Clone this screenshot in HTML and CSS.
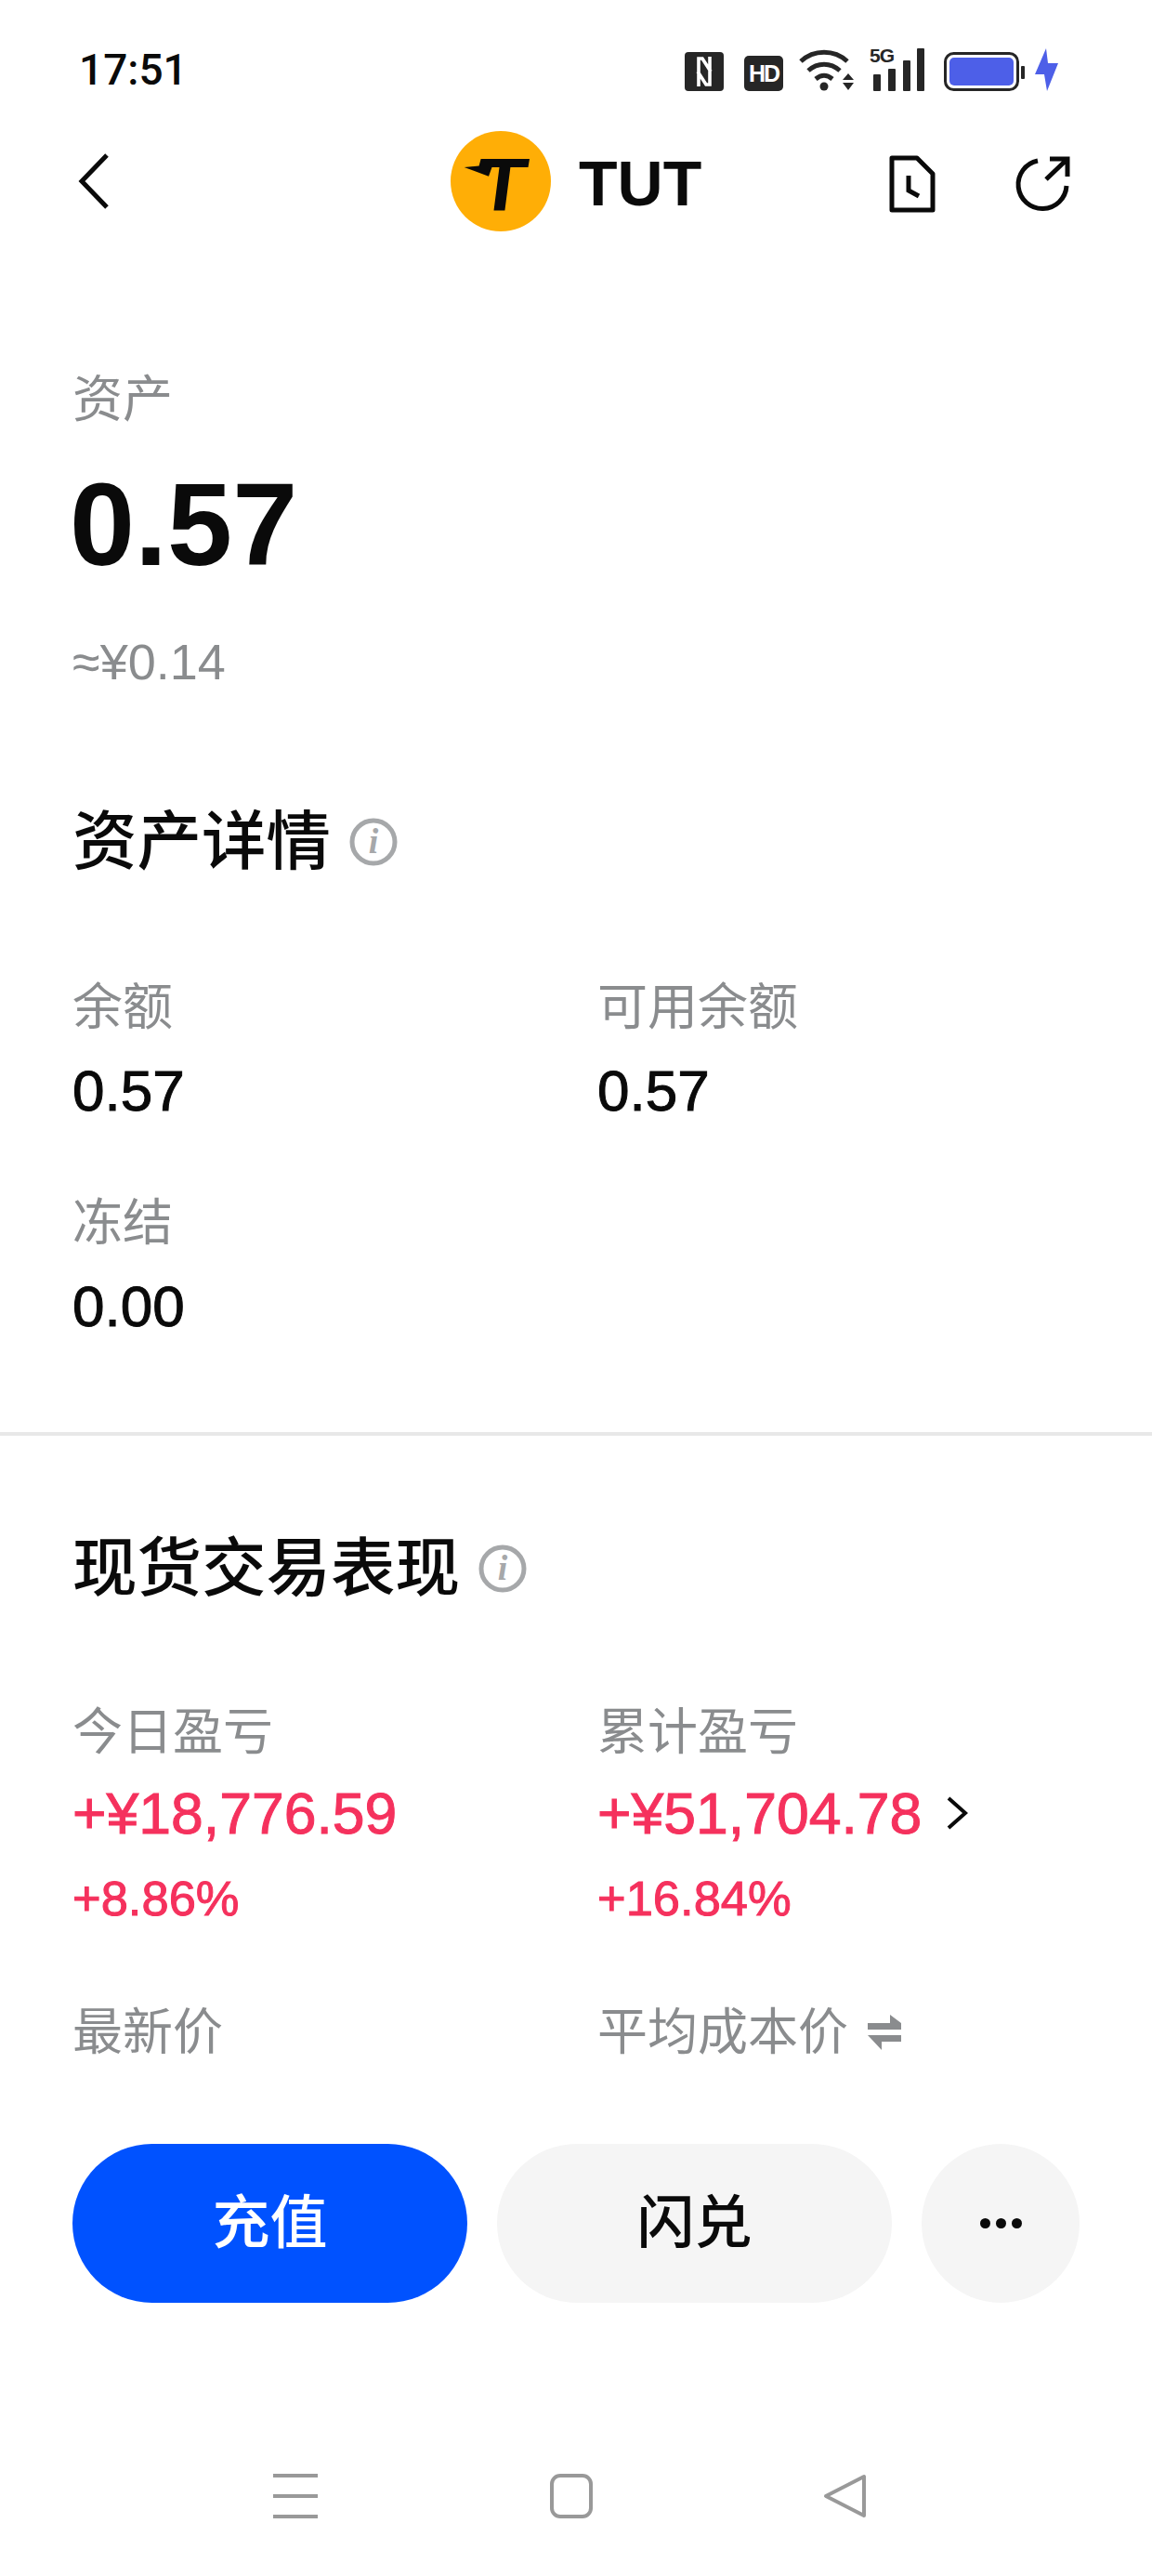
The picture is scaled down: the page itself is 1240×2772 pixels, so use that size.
FILE: index.html
```html
<!DOCTYPE html>
<html lang="zh-CN">
<head>
  <meta charset="UTF-8">
  <title>TUT</title>
  <link rel="stylesheet" href="styles.css">
</head>
<body>
  <div class="phone">

    <!-- STATUS BAR -->
    <div class="status-bar">
      <span class="time">17:51</span>
      <div class="status-icons">
        <svg class="st-nfc" width="42" height="42" viewBox="0 0 42 42"><rect width="42" height="42" rx="4" fill="#262626"/><path d="M15 37V7h4l9 14M27 5v30h-4l-9-14" fill="none" stroke="#fff" stroke-width="3.6"/></svg>
        <span class="st-hd">HD</span>
        <svg class="st-wifi" width="60" height="46" viewBox="0 0 60 46"><g fill="none" stroke="#262626" stroke-width="5"><path d="M2 14C16 1 38 1 52 14"/><path d="M10 24c10-9 24-9 34 0"/><path d="M18 33c6-5 12-5 18 0"/></g><circle cx="27" cy="41" r="4.5" fill="#262626"/><path d="M53 27l6 7H47zM47 37h12l-6 8z" fill="#262626"/></svg>
        <div class="st-signal">
          <span class="st-5g">5G</span>
          <svg width="60" height="46" viewBox="0 0 60 46"><g fill="#262626"><rect x="4" y="28" width="8" height="18" rx="1"/><rect x="20" y="22" width="8" height="24" rx="1"/><rect x="36" y="13" width="8" height="33" rx="1"/><rect x="51" y="0" width="8" height="46" rx="1"/></g></svg>
        </div>
        <svg class="st-batt" width="88" height="42" viewBox="0 0 88 42"><rect x="1.5" y="1.5" width="78" height="39" rx="9" fill="none" stroke="#262626" stroke-width="3"/><rect x="6" y="6" width="69" height="30" rx="5" fill="#4d5fe8"/><rect x="83" y="15" width="4" height="14" rx="1" fill="#262626"/></svg>
        <svg class="st-bolt" width="26" height="46" viewBox="0 0 26 46"><path d="M12 0L0 28h10l3 18L25 16H14z" fill="#4d5fe8"/></svg>
      </div>
    </div>

    <!-- HEADER -->
    <div class="nav">
      <svg class="nav-back" width="34" height="60" viewBox="0 0 34 60"><path d="M31 2L4 30l27 28" fill="none" stroke="#0a0a0a" stroke-width="5"/></svg>
      <div class="nav-title">
        <svg width="108" height="108" viewBox="0 0 108 108"><circle cx="54" cy="54" r="54" fill="#ffae06"/><path d="M32.6 30H85L83.5 39H64.4L58.4 85.6H46.5L52.5 39H44.5L41 48.7 14.7 39 30.6 37.6z" fill="#0a0a0a"/></svg>
        <span class="coin-name">TUT</span>
      </div>
      <div class="nav-actions">
        <svg width="50" height="62" viewBox="0 0 50 62"><path d="M3 3H30L47 20V59H3z" fill="none" stroke="#0a0a0a" stroke-width="5" stroke-linejoin="round"/><path d="M21 22V38L32 44" fill="none" stroke="#0a0a0a" stroke-width="5"/></svg>
        <svg width="60" height="62" viewBox="0 0 60 62"><path d="M25 6A26 26 0 1 0 56 33" fill="none" stroke="#0a0a0a" stroke-width="5"/><path d="M34 26L56 5M38 4H57V23" fill="none" stroke="#0a0a0a" stroke-width="5"/></svg>
      </div>
    </div>

    <!-- ASSET -->
    <section class="asset">
      <div class="label">资产</div>
      <div class="asset-amount">0.57</div>
      <div class="asset-cny">≈¥0.14</div>
    </section>

    <!-- DETAILS -->
    <section class="details">
      <h2 class="section-title">资产详情
        <svg class="info" width="52" height="52" viewBox="0 0 52 52"><circle cx="26" cy="26" r="23" fill="none" stroke="#a6a8aa" stroke-width="5"/><text x="26" y="38" class="info-i">i</text></svg>
      </h2>
      <div class="grid">
        <div class="cell">
          <div class="label">余额</div>
          <div class="value">0.57</div>
        </div>
        <div class="cell">
          <div class="label">可用余额</div>
          <div class="value">0.57</div>
        </div>
        <div class="cell">
          <div class="label">冻结</div>
          <div class="value">0.00</div>
        </div>
      </div>
    </section>

    <div class="divider"></div>

    <!-- SPOT PERFORMANCE -->
    <section class="spot">
      <h2 class="section-title">现货交易表现
        <svg class="info" width="52" height="52" viewBox="0 0 52 52"><circle cx="26" cy="26" r="23" fill="none" stroke="#a6a8aa" stroke-width="5"/><text x="26" y="38" class="info-i">i</text></svg>
      </h2>
      <div class="grid">
        <div class="cell">
          <div class="label">今日盈亏</div>
          <div class="pnl">+¥18,776.59</div>
          <div class="pct">+8.86%</div>
        </div>
        <div class="cell">
          <div class="label">累计盈亏</div>
          <div class="pnl">+¥51,704.78
            <svg width="24" height="36" viewBox="0 0 24 36"><path d="M3 2L21 18 3 34" fill="none" stroke="#0a0a0a" stroke-width="4"/></svg>
          </div>
          <div class="pct">+16.84%</div>
        </div>
        <div class="cell">
          <div class="label">最新价</div>
        </div>
        <div class="cell">
          <div class="label">平均成本价
            <svg class="swap" width="38" height="38" viewBox="0 0 38 38"><path d="M1 9H25V0L37 9V16H1zM37 22V29H16V38L1 22z" fill="#8a8c8e"/></svg>
          </div>
        </div>
      </div>
    </section>

    <!-- BUTTONS -->
    <div class="actions">
      <div class="btn btn-primary">充值</div>
      <div class="btn btn-light">闪兑</div>
      <div class="btn-more"><span></span><span></span><span></span></div>
    </div>

    <!-- ANDROID NAV -->
    <div class="sys-nav">
      <div class="sys-menu"><span></span><span></span><span></span></div>
      <div class="sys-home"></div>
      <svg width="48" height="48" viewBox="0 0 48 48"><path d="M44 3V45L3 24z" fill="none" stroke="#999" stroke-width="4" stroke-linejoin="round"/></svg>
    </div>

  </div>
</body>
</html>
```
FILE: styles.css
```css
* { box-sizing: border-box; }

html, body {
  margin: 0;
  background: #fff;
}

.phone {
  width: 1240px;
  height: 2772px;
  overflow: hidden;
  font-family: "Liberation Sans", "Noto Sans CJK SC", sans-serif;
  color: #0a0a0a;
}

/* status bar */
.status-bar {
  display: flex;
  justify-content: space-between;
  align-items: center;
  height: 50px;
  margin-top: 50px;
  padding: 0 100px 0 85px;
}
.time {
  font-family: Roboto, sans-serif;
  font-size: 46px;
  font-weight: 500;
  line-height: 50px;
}
.status-icons {
  display: flex;
  align-items: flex-end;
  gap: 22px;
}
.st-hd {
  width: 42px;
  height: 38px;
  background: #262626;
  border-radius: 5px;
  color: #fff;
  font-size: 25px;
  font-weight: 700;
  line-height: 38px;
  text-align: center;
  letter-spacing: -2px;
}
.st-wifi { margin-left: -5px; }
.st-signal {
  position: relative;
  margin-left: -6px;
}
.st-signal svg { display: block; }
.st-5g {
  position: absolute;
  left: 0;
  top: -4px;
  font-size: 21px;
  font-weight: 700;
  letter-spacing: -1px;
  color: #262626;
}
.st-batt { margin-left: -2px; }
.st-bolt { margin-left: -12px; }

/* header */
.nav {
  display: flex;
  align-items: center;
  height: 108px;
  margin-top: 41px;
  padding: 0 88px 0 84px;
}
.nav-back { flex: none; }
.nav-title {
  display: flex;
  align-items: center;
  gap: 30px;
  margin-left: 367px;
}
.coin-name {
  font-size: 68px;
  font-weight: 700;
  padding-top: 3px;
}
.nav-actions {
  display: flex;
  align-items: center;
  gap: 85px;
  margin-top: 6px;
  margin-left: auto;
}

/* asset block */
.asset {
  padding: 0 78px;
  margin-top: 141px;
}
.label {
  font-size: 54px;
  line-height: 80px;
  color: #8a8c8e;
  display: flex;
  align-items: center;
  white-space: nowrap;
}
.asset-amount {
  font-size: 126px;
  font-weight: 700;
  line-height: 150px;
  margin-top: 20px;
  margin-left: -3px;
}
.asset-cny {
  font-size: 54px;
  line-height: 70px;
  color: #8a8c8e;
  margin-top: 37px;
}

/* sections */
.details {
  padding: 0 78px;
  margin-top: 119px;
}
.section-title {
  display: flex;
  align-items: center;
  margin: 0;
  font-size: 69.5px;
  font-weight: 500;
  line-height: 80px;
}
.info { margin-left: 20px; }
.info-i {
  font-family: "Liberation Serif", serif;
  font-size: 38px;
  font-style: italic;
  font-weight: 700;
  text-anchor: middle;
  fill: #a6a8aa;
}
.grid {
  display: grid;
  grid-template-columns: 565px 1fr;
}
.details .grid {
  margin-top: 98px;
  row-gap: 62px;
}
.value {
  font-size: 62px;
  line-height: 80px;
  margin-top: 10px;
  -webkit-text-stroke: 1px #0a0a0a;
}
.divider {
  height: 4px;
  margin-top: 95px;
  background: #e8e8e8;
}
.spot {
  padding: 0 78px;
  margin-top: 103px;
}
.spot .grid {
  margin-top: 96px;
  row-gap: 69px;
}
.pnl {
  display: flex;
  align-items: center;
  gap: 26px;
  font-size: 62.5px;
  line-height: 80px;
  margin-top: 7px;
  color: #f5315d;
  -webkit-text-stroke: 1px #f5315d;
  white-space: nowrap;
}
.pct {
  font-size: 52.5px;
  line-height: 70px;
  margin-top: 17px;
  color: #f5315d;
  -webkit-text-stroke: 1px #f5315d;
}
.swap { margin-left: 20px; }

/* buttons */
.actions {
  display: flex;
  gap: 32px;
  margin-top: 80px;
  padding: 0 78px;
}
.btn {
  flex: none;
  width: 425px;
  height: 171px;
  border-radius: 86px;
  font-size: 62px;
  font-weight: 500;
  line-height: 171px;
  text-align: center;
}
.btn-primary {
  background: #0052ff;
  color: #fff;
}
.btn-light { background: #f5f5f5; }
.btn-more {
  display: flex;
  justify-content: center;
  align-items: center;
  gap: 6px;
  flex: none;
  width: 170px;
  height: 171px;
  border-radius: 50%;
  background: #f5f5f5;
}
.btn-more span {
  width: 11px;
  height: 11px;
  border-radius: 50%;
  background: #0a0a0a;
}

/* system nav */
.sys-nav {
  display: flex;
  align-items: center;
  height: 50px;
  margin-top: 183px;
  padding-left: 294px;
}
.sys-menu {
  display: flex;
  flex-direction: column;
  justify-content: space-between;
  width: 48px;
  height: 48px;
}
.sys-menu span {
  height: 4px;
  background: #999;
}
.sys-home {
  width: 46px;
  height: 48px;
  margin-left: 250px;
  border: 4px solid #999;
  border-radius: 11px;
}
.sys-nav svg { margin-left: 248px; }
```
